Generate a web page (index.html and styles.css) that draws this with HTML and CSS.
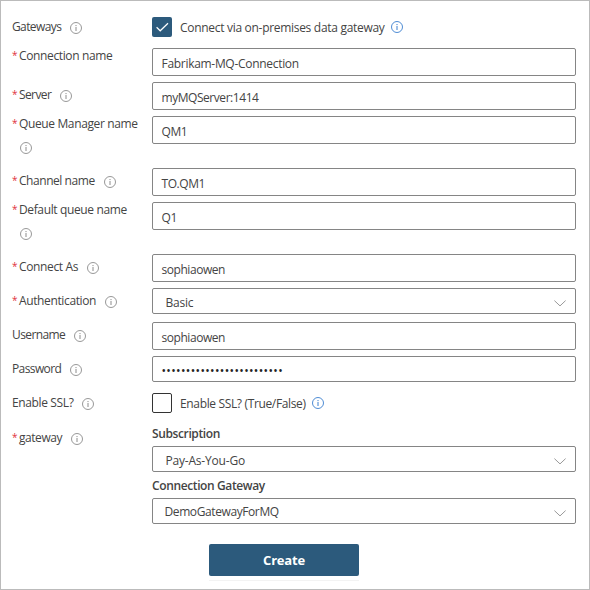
FILE: index.html
```html
<!DOCTYPE html>
<html lang="en">
<head>
<meta charset="utf-8">
<title>Create connection</title>
<link rel="stylesheet" href="styles.css">
</head>
<body>
<svg class="defs" width="0" height="0" aria-hidden="true">
  <symbol id="info" viewBox="0 0 12 12"><circle cx="6" cy="6" r="5.5" fill="none" stroke="currentColor" stroke-width=".9"/><path d="M6 5V9M6 3v1.1" fill="none" stroke="currentColor"/></symbol>
  <symbol id="chevron" viewBox="0 0 12 7"><path d="M.4.6 6 5.9 11.6.6" fill="none" stroke="currentColor"/></symbol>
</svg>
<form class="panel">
  <div class="row">
    <div class="label tight">Gateways<svg class="info"><use href="#info"/></svg></div>
    <div class="check"><span class="box checked"><svg viewBox="0 0 20 20"><path d="M4.6 10.3 8.2 13.8 16 6.2" fill="none" stroke="#fff" stroke-width="1.2"/></svg></span><span class="caption">Connect via on-premises data gateway</span><svg class="info blue"><use href="#info"/></svg></div>
  </div>
  <div class="row">
    <div class="label req high">Connection name</div>
    <div class="field">Fabrikam-MQ-Connection</div>
  </div>
  <div class="row">
    <div class="label req tight">Server<svg class="info"><use href="#info"/></svg></div>
    <div class="field tight">myMQServer:1414</div>
  </div>
  <div class="row tall">
    <div class="label req high wrap"><span>Queue Manager name</span><svg class="info"><use href="#info"/></svg></div>
    <div class="field tight">QM1</div>
  </div>
  <div class="row">
    <div class="label req snug">Channel name<svg class="info"><use href="#info"/></svg></div>
    <div class="field tight">TO.QM1</div>
  </div>
  <div class="row tall">
    <div class="label req high wrap"><span>Default queue name</span><svg class="info"><use href="#info"/></svg></div>
    <div class="field">Q1</div>
  </div>
  <div class="row">
    <div class="label req">Connect As<svg class="info"><use href="#info"/></svg></div>
    <div class="field tight">sophiaowen</div>
  </div>
  <div class="row">
    <div class="label req">Authentication<svg class="info"><use href="#info"/></svg></div>
    <div class="field select">Basic<svg class="chevron"><use href="#chevron"/></svg></div>
  </div>
  <div class="row">
    <div class="label tight">Username<svg class="info"><use href="#info"/></svg></div>
    <div class="field tight">sophiaowen</div>
  </div>
  <div class="row">
    <div class="label tight">Password<svg class="info"><use href="#info"/></svg></div>
    <div class="field secret">•••••••••••••••••••••••••</div>
  </div>
  <div class="row">
    <div class="label">Enable SSL?<svg class="info"><use href="#info"/></svg></div>
    <div class="check"><span class="box"></span><span class="caption snug">Enable SSL? (True/False)</span><svg class="info blue"><use href="#info"/></svg></div>
  </div>
  <div class="row gateway">
    <div class="label req snug">gateway<svg class="info"><use href="#info"/></svg></div>
    <div class="stack">
      <div class="heading">Subscription</div>
      <div class="field select">Pay-As-You-Go<svg class="chevron"><use href="#chevron"/></svg></div>
      <div class="heading">Connection Gateway</div>
      <div class="field select near">DemoGatewayForMQ<svg class="chevron"><use href="#chevron"/></svg></div>
    </div>
  </div>
  <button class="create" type="button">Create</button>
</form>
</body>
</html>
```
FILE: styles.css
```css
* { box-sizing: border-box; }
body { margin: 0; background: #fff; }
.defs { display: none; }
.panel {
  width: 590px;
  height: 590px;
  padding: 13px 13px 0 11px;
  border: 1px solid #bbb;
  font: 12px/16px "Open Sans", "Noto Sans", sans-serif;
  letter-spacing: -0.3px;
  color: #444;
}
.row { display: grid; grid-template-columns: 140px 424px; align-items: start; height: 34px; }
.row.tall { height: 52px; }
.row.gateway { height: 120px; }
.label { display: flex; align-items: center; padding-top: 5px; white-space: nowrap; letter-spacing: -0.37px; }
.label.high { padding-top: 0; }
.row.gateway .label { padding-top: 6px; }
.label.req::before { content: "*"; width: 7px; height: 16px; flex: none; color: #e0303c; font-size: 10px; line-height: 14px; }
.label.wrap { flex-wrap: wrap; row-gap: 8px; }
.label.wrap span { width: 130px; }
.label .info { margin: 2px 0 0 9px; color: #8c8c8c; }
.label.wrap .info { margin-left: 8px; }
.label.snug { letter-spacing: -0.45px; }
.caption.snug { letter-spacing: -0.35px; }
.label.tight { letter-spacing: -0.6px; }
.field.tight { letter-spacing: -0.45px; }
.info { width: 12px; height: 12px; flex: none; }
.blue { color: #3b7fcf; }
.field {
  height: 28px;
  padding: 7px 8px 0 8.5px;
  border: 1px solid #858585;
  border-radius: 2px;
}
.field.select { display: flex; justify-content: space-between; height: 26px; padding: 6px 9px 0 12.5px; letter-spacing: -0.2px; }
.field.near { padding-left: 11.5px; padding-top: 5px; letter-spacing: -0.4px; }
.field.near .chevron { margin-top: 6px; }
.field.secret { height: 26px; padding-top: 6px; color: #222; letter-spacing: 0.35px; }
.chevron { width: 12px; height: 7px; margin-top: 5px; color: #999; }
.check { display: flex; align-items: center; padding-top: 3px; }
.box { width: 20px; height: 20px; border: 1px solid #333; border-radius: 2px; }
.box.checked { border: 0; background: #2c5a7c; }
.box svg { display: block; width: 20px; height: 20px; }
.caption { margin: 1px 6px 0 8px; }
.heading { height: 22px; padding-top: 2px; font-weight: 600; letter-spacing: -0.38px; }
.field + .heading { height: 26px; padding-top: 6px; }
.create {
  display: block;
  width: 150px;
  height: 32px;
  margin: 0 0 0 197px;
  padding: 0;
  border: 0;
  border-radius: 2px;
  background: #2c5a7c;
  color: #fff;
  font: 700 13px/32px "Open Sans", "Noto Sans", sans-serif;
  letter-spacing: -0.2px;
}
.panel::after { content: ""; display: block; width: 150px; height: 1px; margin: 4px 0 0 197px; background: #f3f3f3; }
```
